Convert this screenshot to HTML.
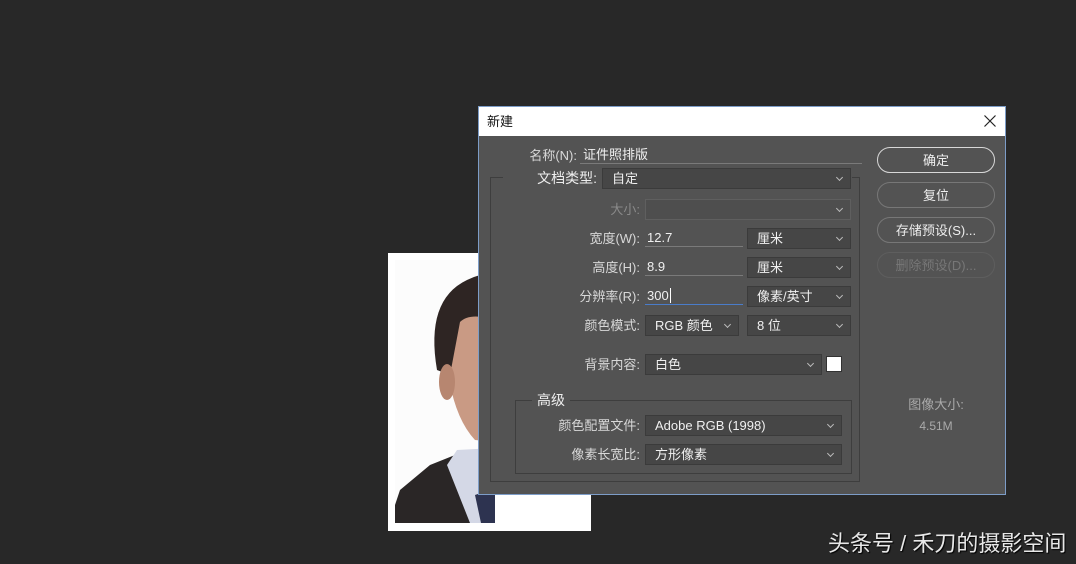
<!DOCTYPE html>
<html><head><meta charset="utf-8"><style>
*{margin:0;padding:0;box-sizing:border-box}
body{width:1076px;height:564px;background:#282828;position:relative;overflow:hidden;font-family:"Liberation Sans","Noto Sans CJK SC",sans-serif;font-size:13px;color:#e0e0e0}
.a{position:absolute}
.lbl{position:absolute;text-align:right;color:#d8d8d8;line-height:21px;white-space:nowrap}
.dd{position:absolute;background:#464646;border:1px solid #3b3b3b;height:21px;line-height:20px;padding-left:9px;color:#f0f0f0}
.dd:after{content:"";position:absolute;right:8px;top:6px;width:4px;height:4px;border-right:1px solid #bbb;border-bottom:1px solid #bbb;transform:rotate(45deg)}
.fld{position:absolute;border-bottom:1px solid #7a7a7a;height:20px;line-height:21px;padding-left:2px;color:#f0f0f0}
.btn{position:absolute;left:877px;width:118px;height:26px;border-radius:13px;border:1px solid #8a8a8a;text-align:center;line-height:25px;color:#eee}
</style></head><body>
<!-- photo -->
<div class="a" style="left:388px;top:253px;width:203px;height:278px;background:#fff"></div>
<svg class="a" style="left:395px;top:260px" width="100" height="263" viewBox="0 0 100 263">
<rect width="100" height="263" fill="#fcfcfc"/>
<path d="M0 245 L5 230 L35 205 L60 195 L100 190 L100 263 L0 263Z" fill="#2a2626"/>
<path d="M52 205 L62 190 L100 188 L100 263 L75 263 Z" fill="#d4d8e6"/>
<path d="M80 235 L100 228 L100 263 L86 263Z" fill="#2d3350"/>
<path d="M50 75 Q52 150 80 180 L100 182 L100 40 L55 55Z" fill="#c99a84"/>
<path d="M42 110 Q30 40 72 20 Q88 12 100 14 L100 60 Q75 52 65 62 L55 115 Z" fill="#2e2523"/>
<ellipse cx="52" cy="122" rx="8" ry="18" fill="#b78670"/>
</svg>
<!-- dialog -->
<div class="a" style="left:478px;top:106px;width:528px;height:389px;background:#535353;border:1px solid #7d9dc8"></div>
<div class="a" style="left:479px;top:107px;width:526px;height:29px;background:#fff;color:#111;line-height:29px;padding-left:8px">新建</div>
<svg class="a" style="left:984px;top:115px" width="12" height="12"><path d="M0.5 0.5L11.5 11.5M11.5 0.5L0.5 11.5" stroke="#222" stroke-width="1.2"/></svg>
<!-- group box -->
<div class="a" style="left:490px;top:177px;width:370px;height:305px;border:1px solid #3e3e3e;border-top:none"></div>
<div class="a" style="left:490px;top:177px;width:13px;height:1px;background:#3e3e3e"></div>
<div class="a" style="left:852px;top:177px;width:8px;height:1px;background:#3e3e3e"></div>

<div class="lbl" style="right:499px;top:145px">名称(N):</div>
<div class="fld" style="left:580px;top:144px;width:282px;padding-left:3px">证件照排版</div>

<div class="lbl" style="right:479px;top:168px;font-size:14px;color:#eee">文档类型:</div>
<div class="dd" style="left:602px;top:168px;width:249px">自定</div>

<div class="lbl" style="right:436px;top:199px;color:#8a8a8a">大小:</div>
<div class="dd" style="left:645px;top:199px;width:206px;background:#4e4e4e;border-color:#5f5f5f"></div>

<div class="lbl" style="right:436px;top:228px">宽度(W):</div>
<div class="fld" style="left:645px;top:227px;width:98px">12.7</div>
<div class="dd" style="left:747px;top:228px;width:104px">厘米</div>

<div class="lbl" style="right:436px;top:257px">高度(H):</div>
<div class="fld" style="left:645px;top:256px;width:98px">8.9</div>
<div class="dd" style="left:747px;top:257px;width:104px">厘米</div>

<div class="lbl" style="right:436px;top:286px">分辨率(R):</div>
<div class="fld" style="left:645px;top:285px;width:98px;border-color:#4a7cc9">300<span style="border-left:1px solid #fff;margin-left:1px"></span></div>
<div class="dd" style="left:747px;top:286px;width:104px">像素/英寸</div>

<div class="lbl" style="right:436px;top:315px">颜色模式:</div>
<div class="dd" style="left:645px;top:315px;width:94px">RGB 颜色</div>
<div class="dd" style="left:747px;top:315px;width:104px">8 位</div>

<div class="lbl" style="right:436px;top:354px">背景内容:</div>
<div class="dd" style="left:645px;top:354px;width:177px">白色</div>
<div class="a" style="left:826px;top:356px;width:16px;height:16px;background:#fff;border:1px solid #333"></div>

<div class="a" style="left:515px;top:400px;width:337px;height:74px;border:1px solid #3e3e3e"></div>
<div class="a" style="left:532px;top:391px;background:#535353;padding:0 5px;line-height:18px;font-size:14px;color:#eee">高级</div>
<div class="lbl" style="right:436px;top:415px">颜色配置文件:</div>
<div class="dd" style="left:645px;top:415px;width:197px">Adobe RGB (1998)</div>
<div class="lbl" style="right:436px;top:444px">像素长宽比:</div>
<div class="dd" style="left:645px;top:444px;width:197px">方形像素</div>

<div class="btn" style="top:147px;border-color:#d8d8d8;border-width:1.5px">确定</div>
<div class="btn" style="top:182px;border-color:#777">复位</div>
<div class="btn" style="top:217px;border-color:#777">存储预设(S)...</div>
<div class="btn" style="top:252px;border-color:#5e5e5e;color:#777">删除预设(D)...</div>

<div class="a" style="left:877px;top:394px;width:118px;text-align:center;color:#aaa">图像大小:</div>
<div class="a" style="left:877px;top:419px;width:118px;text-align:center;color:#aaa;font-size:12px">4.51M</div>

<div class="a" style="left:828px;top:530px;font-size:22px;color:#e8e8e8;text-shadow:1px 1px 1px #000;line-height:28px">头条号 / 禾刀的摄影空间</div>
</body></html>
